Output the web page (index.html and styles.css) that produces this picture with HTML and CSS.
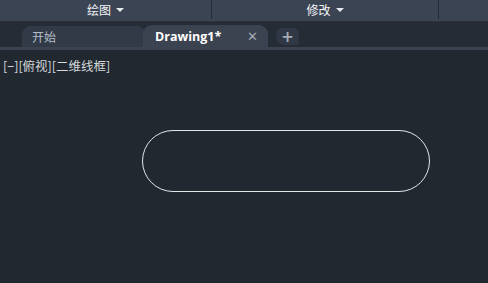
FILE: index.html
```html
<!DOCTYPE html>
<html lang="zh">
<head>
<meta charset="utf-8">
<link rel="stylesheet" href="styles.css">
</head>
<body>
<div class="app">
  <div class="menubar">
    <div class="menu menu-draw">绘图 <span class="caret"></span></div>
    <div class="menu menu-modify">修改 <span class="caret"></span></div>
    <div class="menu menu-rest"></div>
  </div>
  <div class="tabbar">
    <div class="tab tab-start">开始</div>
    <div class="tab tab-active"><span class="tab-title">Drawing1*</span><span class="tab-close">✕</span></div>
    <div class="tab tab-plus">+</div>
  </div>
  <div class="tabline"></div>
  <div class="canvas">
    <div class="viewlabel">[−][俯视][二维线框]</div>
    <div class="slot"></div>
  </div>
</div>
</body>
</html>
```
FILE: styles.css
```css
html, body {
  margin: 0;
  padding: 0;
  background: #212830;
  width: 488px;
  height: 283px;
  overflow: hidden;
  font-family: "Noto Sans CJK SC", "Noto Sans", "Liberation Sans", sans-serif;
}
.app {
  display: flex;
  flex-direction: column;
  height: 283px;
}
.menubar {
  display: flex;
  height: 22px;
  background: #3b4453;
  border-bottom: 1px solid #2b313b;
  box-sizing: border-box;
}
.menu {
  display: flex;
  align-items: center;
  justify-content: center;
  color: #f2f4f7;
  font-size: 12px;
  gap: 5px;
}
.menu-draw {
  width: 211px;
  border-right: 1px solid #262b33;
  margin-bottom: 2px;
}
.menu-modify {
  width: 226px;
  border-right: 1px solid #262b33;
  margin-bottom: 2px;
}
.menu-rest { flex: 1; }
.caret {
  width: 0;
  height: 0;
  border-left: 4px solid transparent;
  border-right: 4px solid transparent;
  border-top: 4px solid #e6e9ee;
  margin-top: 1px;
}
.tabbar {
  display: flex;
  align-items: flex-end;
  height: 25px;
  background: #262c36;
  padding-left: 22px;
}
.tab {
  display: flex;
  align-items: center;
  font-size: 12px;
  box-sizing: border-box;
}
.tab-start {
  width: 124px;
  height: 21px;
  background: #333a47;
  border-radius: 9px 9px 0 0;
  color: #b4bcc8;
  padding-left: 10px;
  margin-right: -3px;
}
.tab-active {
  width: 125px;
  height: 22px;
  background: #3b4351;
  border-radius: 9px 9px 0 0;
  color: #ffffff;
  padding-left: 12px;
  padding-right: 10px;
  justify-content: space-between;
  position: relative;
  z-index: 1;
}
.tab-title {
  font-family: "Open Sans", "Liberation Sans", sans-serif;
  font-weight: 700;
  font-size: 12.5px;
}
.tab-close {
  color: #a4abb6;
  font-size: 13px;
  font-weight: 700;
  font-family: "DejaVu Sans", sans-serif;
}
.tab-plus {
  width: 23px;
  height: 17px;
  margin-left: 8px;
  margin-bottom: 2px;
  background: #313845;
  border-radius: 7px 6px 2px 8px;
  color: #a4abb6;
  justify-content: center;
  font-size: 15px;
  font-weight: 700;
  font-family: "DejaVu Sans", sans-serif;
}
.tabline {
  height: 3px;
  background: #3b4351;
}
.canvas {
  flex: 1;
  position: relative;
  background: #212830;
}
.viewlabel {
  color: #d6d9dd;
  font-size: 12.5px;
  padding: 8px 0 0 3px;
  line-height: 16px;
}
.slot {
  position: absolute;
  left: 142px;
  top: 80px;
  width: 288px;
  height: 62px;
  box-sizing: border-box;
  border: 1.3px solid #e4e6e8;
  border-radius: 31px;
}
```
